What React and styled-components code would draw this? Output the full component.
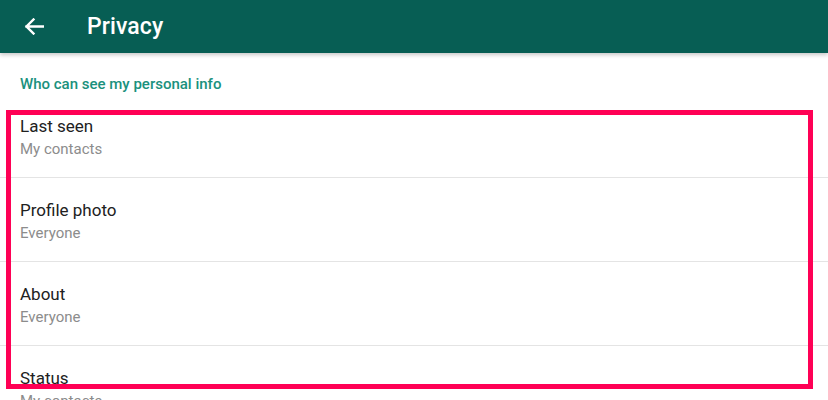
import React from "react";
import styled, { createGlobalStyle } from "styled-components";

const Global = createGlobalStyle`
  html, body { margin: 0; padding: 0; background: #fff; }
  body { font-family: Roboto, "Noto Sans", "Liberation Sans", sans-serif; width: 828px; height: 400px; overflow: hidden; }
`;

const Screen = styled.div`
  position: relative;
  width: 828px;
  height: 400px;
  overflow: hidden;
  background: #fff;
`;

const TopBar = styled.header`
  position: relative;
  z-index: 1;
  height: 53px;
  background: #075e54;
  display: flex;
  align-items: center;
  box-shadow: 0 2px 4px rgba(0, 0, 0, 0.22);
`;

const BackButton = styled.button`
  width: 44px;
  height: 44px;
  margin-left: 12px;
  border: 0;
  background: transparent;
  padding: 0;
  display: flex;
  align-items: center;
  justify-content: center;
  color: #fff;
`;

const Title = styled.h1`
  margin: 0 0 0 31px;
  font-size: 23px;
  font-weight: 500;
  color: #fff;
  letter-spacing: 0.1px;
`;

const SectionLabel = styled.div`
  padding: 21px 20px 0;
  height: 20px;
  line-height: 20px;
  font-size: 15px;
  font-weight: 500;
  color: #1a917d;
`;

const List = styled.ul`
  list-style: none;
  margin: 0;
  padding: 0;
`;

const Row = styled.li`
  padding: 21px 20px 0;
  height: 62px;
  border-bottom: 1px solid #e4e4e4;
  display: flex;
  flex-direction: column;
  gap: 2px;
`;

const RowTitle = styled.div`
  font-size: 17px;
  line-height: 22px;
  color: #212121;
`;

const RowValue = styled.div`
  font-size: 15px;
  line-height: 20px;
  color: #8c8c8c;
`;

const Highlight = styled.div`
  position: absolute;
  left: 6px;
  top: 110px;
  width: 807px;
  height: 279px;
  box-sizing: border-box;
  border: 5px solid #ff0055;
  pointer-events: none;
`;

const rows = [
  { title: "Last seen", value: "My contacts" },
  { title: "Profile photo", value: "Everyone" },
  { title: "About", value: "Everyone" },
  { title: "Status", value: "My contacts" },
];

export default function App() {
  return (
    <Screen>
      <Global />
      <TopBar>
        <BackButton aria-label="Back">
          <svg width="20" height="17" viewBox="0 0 20 17" fill="none">
            <path d="M19 8.5H2.5M9.5 1.5L2.5 8.5L9.5 15.5" stroke="#fff" strokeWidth="2.4" strokeLinecap="square" />
          </svg>
        </BackButton>
        <Title>Privacy</Title>
      </TopBar>
      <SectionLabel>Who can see my personal info</SectionLabel>
      <List>
        {rows.map((r) => (
          <Row key={r.title}>
            <RowTitle>{r.title}</RowTitle>
            <RowValue>{r.value}</RowValue>
          </Row>
        ))}
      </List>
      <Highlight />
    </Screen>
  );
}
